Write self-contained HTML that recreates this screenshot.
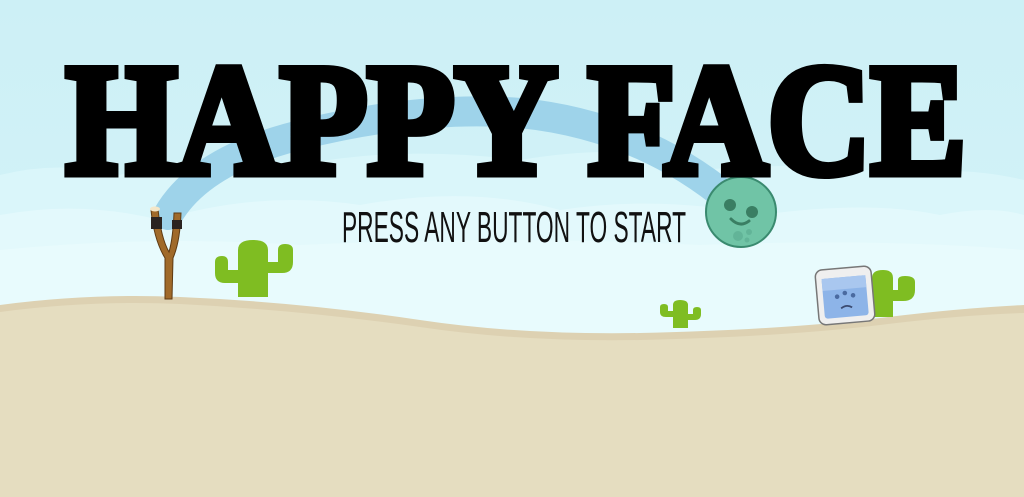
<!DOCTYPE html>
<html><head><meta charset="utf-8"><style>
html,body{margin:0;padding:0;width:1024px;height:497px;overflow:hidden;background:#cff1f7}
svg{display:block}
</style></head><body>
<svg width="1024" height="497" viewBox="0 0 1024 497" xmlns="http://www.w3.org/2000/svg">
<defs>
<linearGradient id="sky" x1="0" y1="0" x2="0" y2="1">
<stop offset="0" stop-color="#cdf0f6"/><stop offset="1" stop-color="#d6f4f9"/>
</linearGradient>
</defs>
<rect width="1024" height="497" fill="url(#sky)"/>
<path d="M0 175 Q60 160 120 175 Q200 150 300 165 Q400 145 520 160 Q640 140 700 170 Q820 160 900 175 Q960 165 1024 180 L1024 497 L0 497Z" fill="#daf6fa"/>
<path d="M0 215 Q80 200 160 220 Q260 190 360 205 Q470 185 560 210 Q660 195 760 215 Q870 200 940 215 Q990 205 1024 215 L1024 497 L0 497Z" fill="#e3f9fc"/>
<path d="M0 250 Q150 235 300 245 Q500 235 700 245 Q880 238 1024 250 L1024 497 L0 497Z" fill="#e8fbfd"/>
<path d="M168 215 Q200 160 300 135 Q420 105 520 113 Q640 125 730 200" fill="none" stroke="#9ed3ea" stroke-width="30" stroke-linecap="round"/>
<path d="M0 305 Q90 293 180 297 Q300 302 420 320 Q520 335 640 333 Q780 330 880 318 Q960 308 1024 305 L1024 497 L0 497Z" fill="#ddd1b2"/>
<path d="M0 312 Q90 300 180 304 Q300 310 420 327 Q520 342 640 340 Q780 337 880 325 Q960 315 1024 313 L1024 497 L0 497Z" fill="#e5ddc0"/>
<g fill="#7fbd22">
<path d="M238 297 L238 250 Q238 240 253 240 Q268 240 268 250 L268 297Z"/>
<path d="M215 262 Q215 256 222 256 Q228 256 228 262 L228 270 L240 270 L240 283 L225 283 Q215 283 215 273Z"/>
<path d="M278 250 Q278 244 285 244 Q293 244 293 250 L293 262 Q293 273 282 273 L266 273 L266 262 L278 262Z"/>
<path d="M673 328 L673 305 Q673 300 680 300 Q688 300 688 305 L688 328Z"/>
<path d="M660 307 Q660 304 664 304 Q668 304 668 307 L668 311 L675 311 L675 317 L666 317 Q660 317 660 312Z"/>
<path d="M693 310 Q693 307 697 307 Q701 307 701 310 L701 314 Q701 320 695 320 L686 320 L686 314 L693 314Z"/>
<path d="M872 317 L872 278 Q872 270 883 270 Q893 270 893 278 L893 317Z"/>
<path d="M898 280 Q898 276 905 276 Q915 276 915 282 L915 290 Q915 301 903 301 L890 301 L890 290 L898 290Z"/>
</g>
<g>
<path d="M151 210 L158 209 Q161 238 169 252 Q173 238 174 213 L181 213 Q180 242 173 258 L172 299 L165 299 L165 258 Q154 240 151 210Z" fill="#a06a2a" stroke="#5e3a12" stroke-width="1"/>
<rect x="151" y="217" width="11" height="12" fill="#2a2320"/>
<rect x="172" y="220" width="10" height="9" fill="#2a2320"/>
<ellipse cx="155" cy="209" rx="5" ry="2.5" fill="#f3e6c8"/>
</g>
<circle cx="741" cy="212" r="35" fill="#70c4a6" stroke="#3a8a6f" stroke-width="2"/>
<circle cx="730" cy="205" r="6" fill="#3a7e63"/>
<circle cx="752" cy="212" r="6" fill="#3a7e63"/>
<path d="M731 219 Q740 228 749 221" fill="none" stroke="#3a7e63" stroke-width="3" stroke-linecap="round"/>
<circle cx="738" cy="236" r="5" fill="#62b498"/>
<circle cx="749" cy="232" r="3" fill="#62b498"/>
<circle cx="747" cy="240" r="2.5" fill="#62b498"/>
<g transform="rotate(-5 845 295)">
<rect x="817" y="268" width="56" height="55" rx="7" fill="#efefef" stroke="#777" stroke-width="1.5"/>
<rect x="823" y="277" width="44" height="40" rx="3" fill="#8db4e8"/>
<rect x="823" y="277" width="44" height="12" fill="#a9c7ef"/>
<circle cx="837" cy="296" r="2.3" fill="#4a6aa0"/>
<circle cx="845" cy="293" r="2.3" fill="#4a6aa0"/>
<circle cx="853" cy="296" r="2.3" fill="#4a6aa0"/>
<path d="M840 308 Q846 304 851 308" fill="none" stroke="#3a4a70" stroke-width="1.8"/>
</g>
<text x="66" y="173" font-family="Liberation Serif, serif" font-weight="bold" font-size="158" textLength="900" lengthAdjust="spacingAndGlyphs" fill="#000" stroke="#000" stroke-width="9" stroke-linejoin="miter">HAPPY FACE</text>
<text x="342" y="242" font-family="Liberation Sans Narrow, Liberation Sans, sans-serif" font-size="44" textLength="344" lengthAdjust="spacingAndGlyphs" fill="#111">PRESS ANY BUTTON TO START</text>
</svg>
</body></html>
